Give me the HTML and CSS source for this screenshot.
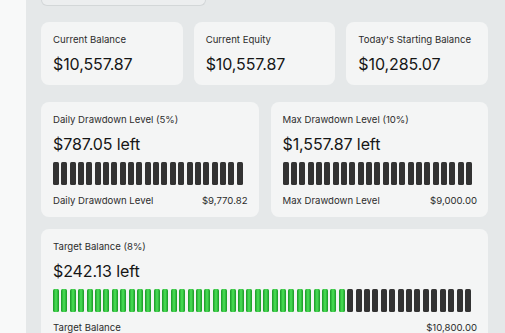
FILE: index.html
```html
<!DOCTYPE html>
<html lang="en">
  <head>
    <meta charset="UTF-8" />
    <meta name="viewport" content="width=device-width, initial-scale=1.0" />
    <title>Konto</title>
    <link rel="stylesheet" href="styles.css">
  </head>
  <body>
    <aside class="sidebar"></aside>

    <main class="indhold">
      <div class="topknap"></div>

      <section class="raekke tre">
        <article class="kort lille">
          <p class="titel">Current Balance</p>
          <p class="vaerdi">$10,557.87</p>
        </article>
        <article class="kort lille">
          <p class="titel">Current Equity</p>
          <p class="vaerdi">$10,557.87</p>
        </article>
        <article class="kort lille">
          <p class="titel">Today's Starting Balance</p>
          <p class="vaerdi">$10,285.07</p>
        </article>
      </section>

      <section class="raekke to">
        <article class="kort">
          <p class="titel">Daily Drawdown Level (5%)</p>
          <p class="vaerdi">$787.05 left</p>
          <div class="bar" data-antal="23" data-groen="0"></div>
          <div class="fod">
            <span>Daily Drawdown Level</span>
            <span>$9,770.82</span>
          </div>
        </article>
        <article class="kort">
          <p class="titel">Max Drawdown Level (10%)</p>
          <p class="vaerdi">$1,557.87 left</p>
          <div class="bar" data-antal="23" data-groen="0"></div>
          <div class="fod">
            <span>Max Drawdown Level</span>
            <span>$9,000.00</span>
          </div>
        </article>
      </section>

      <section class="raekke en">
        <article class="kort">
          <p class="titel">Target Balance (8%)</p>
          <p class="vaerdi">$242.13 left</p>
          <div class="bar lang" data-antal="50" data-groen="35"></div>
          <div class="fod">
            <span>Target Balance</span>
            <span>$10,800.00</span>
          </div>
        </article>
      </section>
    </main>

    <script>
      //lav alle streger i barerne
      document.querySelectorAll(".bar").forEach((bar) => {
        const antal = Number(bar.dataset.antal);
        const groen = Number(bar.dataset.groen);
        for (let i = 0; i < antal; i++) {
          const streg = document.createElement("span");
          streg.classList.add("streg");
          if (i < groen) streg.classList.add("groen");
          bar.appendChild(streg);
        }
      });
    </script>
  </body>
</html>
```

FILE: styles.css
```css
* {
  box-sizing: border-box;
}

body {
  margin: 0;
  display: flex;
  height: 333px;
  overflow: hidden;
  font-family: Inter, "Noto Sans", sans-serif;
  background-color: #e5e8e9;
  color: #161616;
}

p {
  margin: 0;
}

.sidebar {
  width: 26px;
  flex-shrink: 0;
  background-color: #f8f9f9;
}

.indhold {
  flex: 1;
  padding: 0 17px 0 15px;
}

.topknap {
  width: 165px;
  height: 6px;
  border: 1px solid #d3d7d8;
  border-top: none;
  border-radius: 0 0 8px 8px;
  background-color: #eceeef;
}

.raekke {
  display: grid;
}

.tre {
  grid-template-columns: repeat(3, 1fr);
  gap: 11px;
  margin-top: 16px;
}

.to {
  grid-template-columns: repeat(2, 1fr);
  gap: 12px;
  margin-top: 17px;
}

.en {
  margin-top: 12px;
}

.kort {
  background-color: #f4f5f5;
  border-radius: 8px;
  padding: 11.5px 11px 10.5px 12px;
}

.kort.lille {
  height: 63px;
}

.titel {
  font-size: 9.6px;
  line-height: 12px;
  color: #2c2c2c;
}

.vaerdi {
  font-size: 16px;
  line-height: 20px;
  margin-top: 8.5px;
  letter-spacing: -0.1px;
}

.bar {
  display: flex;
  gap: 2.35px;
  height: 22.5px;
  margin-top: 8px;
}

.bar.lang {
  gap: 2.42px;
}

.streg {
  width: 6px;
  border-radius: 1.5px;
  background-color: #333;
}

.streg.groen {
  background: linear-gradient(to right, #199826, #4be257 50%, #199826);
}

.fod {
  display: flex;
  justify-content: space-between;
  font-size: 9.6px;
  line-height: 12px;
  margin-top: 10px;
  color: #2c2c2c;
}
```
